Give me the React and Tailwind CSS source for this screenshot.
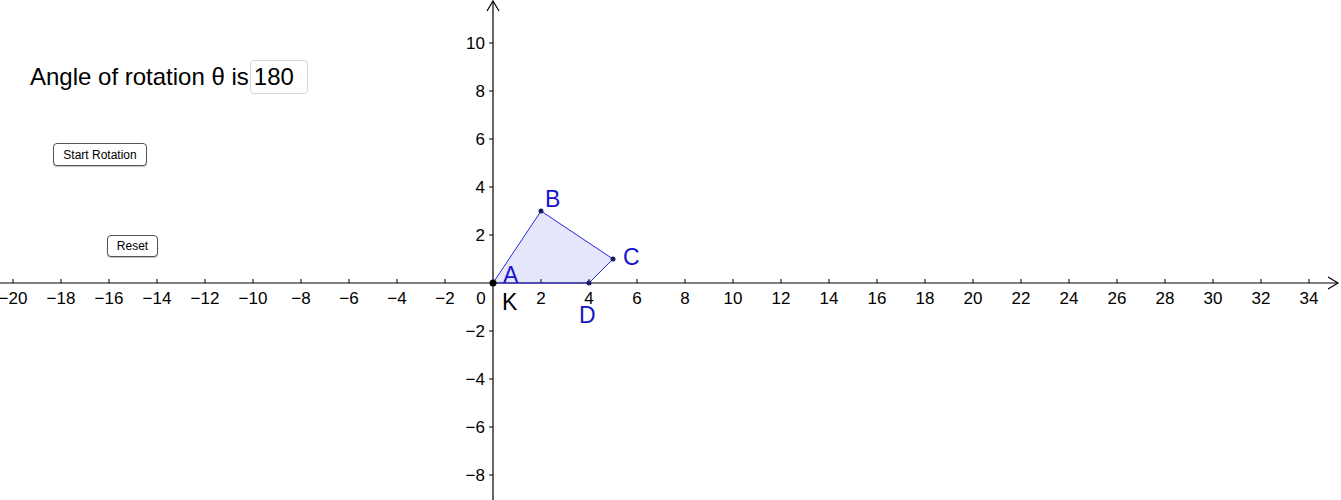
const OX = 493;
const OY = 283;
const U = 24;

const xTicks = [];
for (let v = -20; v <= 34; v += 2) if (v !== 0) xTicks.push(v);
const yTicks = [-8, -6, -4, -2, 2, 4, 6, 8, 10];

const fmt = (v) => (v < 0 ? "\u2212" + Math.abs(v) : String(v));

const pts = { A: [0, 0], B: [2, 3], C: [5, 1], D: [4, 0] };
const px = ([x, y]) => [OX + x * U, OY - y * U];

function Graph() {
  const poly = ["A", "B", "C", "D"].map((k) => px(pts[k]).join(",")).join(" ");
  return (
    <svg width="1341" height="500" className="block" style={{ fontFamily: '"Liberation Sans", Arial, sans-serif' }}>
      {/* axes */}
      <line x1="0" y1={OY} x2="1338" y2={OY} stroke="#000" strokeWidth="1.2" />
      <polyline points="1328,277 1338,283 1328,289" fill="none" stroke="#000" strokeWidth="1.2" />
      <line x1={OX} y1="500" x2={OX} y2="1" stroke="#000" strokeWidth="1.2" />
      <polyline points="487,11 493,1 499,11" fill="none" stroke="#000" strokeWidth="1.2" />

      {xTicks.map((v) => (
        <g key={v}>
          <line x1={OX + v * U} y1={OY - 4} x2={OX + v * U} y2={OY} stroke="#000" />
          <text x={OX + v * U} y={OY + 21} fontSize="17" textAnchor="middle" fill="#000">
            {fmt(v)}
          </text>
        </g>
      ))}
      <text x="481" y={OY + 21} fontSize="17" textAnchor="middle" fill="#000">0</text>

      {yTicks.map((v) => (
        <g key={v}>
          <line x1={OX - 4} y1={OY - v * U} x2={OX} y2={OY - v * U} stroke="#000" />
          <text x="485" y={OY - v * U + 6} fontSize="17" textAnchor="end" fill="#000">
            {fmt(v)}
          </text>
        </g>
      ))}

      {/* polygon */}
      <polygon points={poly} fill="rgba(0,0,220,0.1)" stroke="#2828d8" strokeWidth="1" />
      {["B", "C", "D"].map((k) => {
        const [x, y] = px(pts[k]);
        return <circle key={k} cx={x} cy={y} r="2.5" fill="#1a1a66" />;
      })}
      <circle cx={OX} cy={OY} r="3.5" fill="#000" />

      <g fontSize="23" fill="#1414cc">
        <text x="545" y="207">B</text>
        <text x="623" y="265">C</text>
        <text x="579" y="323">D</text>
        <text x="503" y="283">A</text>
      </g>
      <text x="502" y="310" fontSize="23" fill="#000">K</text>
    </svg>
  );
}

export default function App() {
  return (
    <div className="relative w-[1341px] h-[500px] bg-white overflow-hidden font-['Liberation_Sans',Arial,sans-serif]">
      <Graph />

      <div className="absolute left-[30px] top-[59px] flex items-center text-[24px] text-black">
        <span>Angle of rotation θ is</span>
        <div className="ml-[1px] w-[58px] h-[34px] border border-[#d6d6d6] rounded-[4px] flex items-center px-[3px]">
          180
        </div>
      </div>

      <button className="absolute left-[53px] top-[143px] w-[94px] h-[23px] border border-[#555] rounded-[4px] bg-white text-[12px] text-black shadow-[0_1px_1px_rgba(0,0,0,0.25)]">
        Start Rotation
      </button>
      <button className="absolute left-[107px] top-[235px] w-[51px] h-[22px] border border-[#555] rounded-[4px] bg-white text-[12px] text-black shadow-[0_1px_1px_rgba(0,0,0,0.25)]">
        Reset
      </button>
    </div>
  );
}
